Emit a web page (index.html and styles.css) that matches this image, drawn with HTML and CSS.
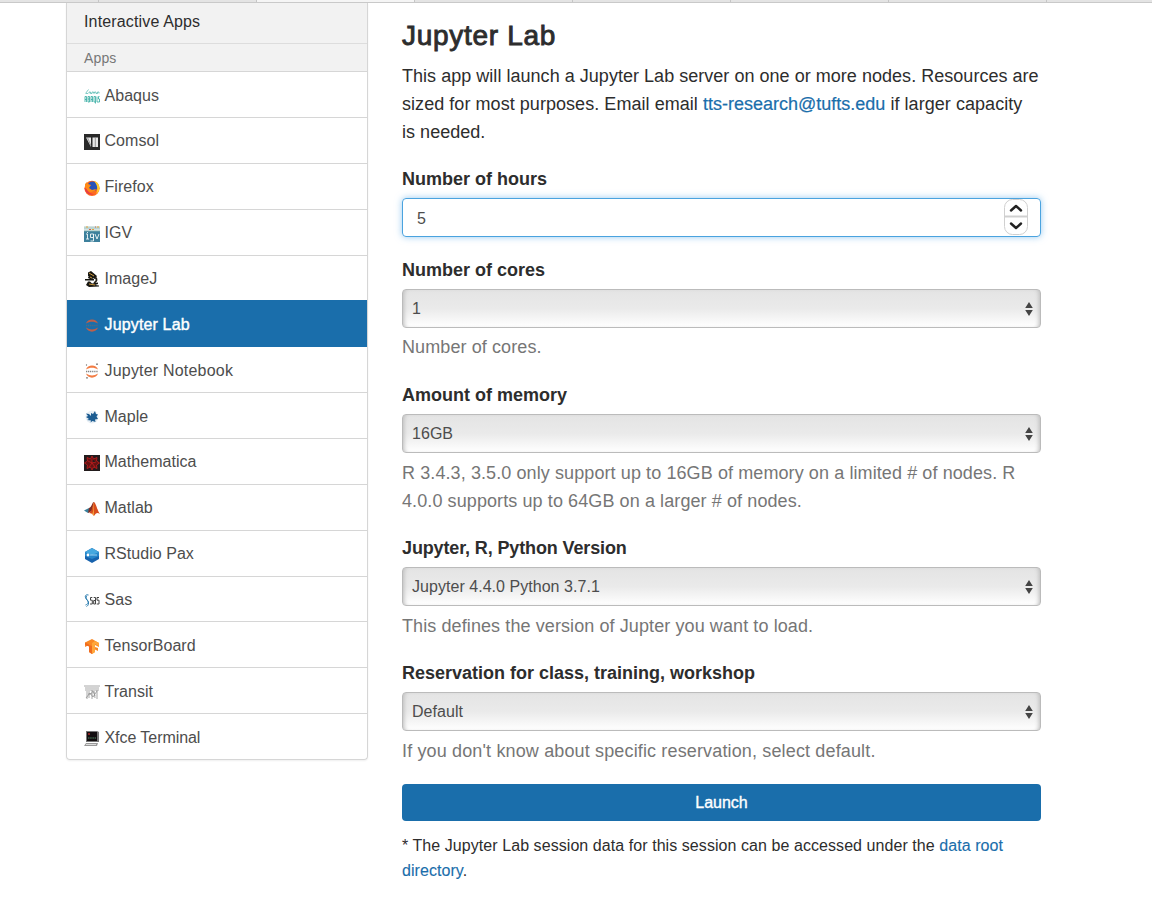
FILE: index.html
```html
<!DOCTYPE html>
<html lang="en">
<head>
<meta charset="utf-8">
<title>Jupyter Lab</title>
<link rel="stylesheet" href="styles.css">
</head>
<body>
<div class="tabs"><i></i><i></i><i class="current"></i><i></i><i></i><i></i><i></i><i></i></div>
<div class="page">
<nav class="sidebar">
  <div class="heading">Interactive Apps</div>
  <div class="subheading">Apps</div>
  <a class="app first"><svg viewBox="0 0 16 16"><g fill="none" stroke="#2eaaa0"><path d="M1.500 5.500L4.500 1.500M2 5.500h2M5 5.500V4h1.500v1.500H8V4h1.500v1.500M10.500 5.500V4H12v1.500h1.500V4H15v1.500" stroke-width=".6"/><path d="M1 14V8.500h1.500V14M1 11.500h1.500M4 14V8.500h1.500V14zM4 11h1.500M7 14V8.500h1.500V14M7 11.500h1.500M10 8.500h1.500V14H10zM11.500 14v1.500M13 8.500V14h1M15.500 8.500h-1V11h1v3h-1.500" stroke-width=".8"/></g></svg><span>Abaqus</span></a>
  <a class="app raised"><svg viewBox="0 0 16 16"><path fill="#292929" d="M0 0h16v16H0z"/><path d="M2 3.500h5V13zM8.500 3.500H14V13H8.500z" fill="#e8e8e8"/><path d="M3.500 3.500L7 12M11.300 3.500V13" stroke="#777" stroke-width=".7"/></svg><span>Comsol</span></a>
  <a class="app raised"><svg viewBox="0 0 16 16"><circle cx="8" cy="8.300" r="7.600" fill="#ff6a1f"/><circle cx="8.500" cy="6.500" r="5" fill="#2852b8"/><path d="M1 4l2-2 1 2 3 1-2 3 3 2 4-1c-1 3-5 4-8 2S1 6 1 4z" fill="#ff8b16"/><path d="M10 1c7 2 7 10 2 13 2-5 2-8-2-13z" fill="#ffce2e"/><path d="M.7 8c0 5 5 8 10 6-4 0-7-2-8-5z" fill="#e73d45"/></svg><span>Firefox</span></a>
  <a class="app raised"><svg viewBox="0 0 16 16"><path fill="#3d809c" d="M0 0h16v16H0z"/><path fill="#d5e4e4" d="M0 0h16v5H0z"/><path d="M0 2h16M0 5h16" stroke="#8eb8b2" stroke-width=".7"/><path d="M2 1h2M8 3.500h2M13 1h2" stroke="#e5a43a"/><path d="M5 3.500h2M11 1h1" stroke="#cf6048"/><path d="M2 8h1.500v5M2 13h3M3.500 6v1M9.500 8H6.500v3.500h3V8v7h-3M11 8l2 5L15 8" fill="none" stroke="#f2f6f7" stroke-width=".9"/></svg><span>IGV</span></a>
  <a class="app"><svg viewBox="0 0 16 16"><path d="M4 1.500L7 0l6 5-2 3-7-3zM5 4l4 3-1 2-4-2zM1 8h9v1.500H1zM4 10.500h2l2 2 6-1v1.500l-3 1 4 .5v1L5 16l-3-2z" fill="#171611"/><path d="M11.500 6.500c2 2 1 4-1.500 5.500" fill="none" stroke="#242016" stroke-width="1.800"/><path d="M5 2l5 3M6 6l2 1M5 13l6 1" stroke="#e0a744" stroke-width=".9"/></svg><span>ImageJ</span></a>
  <a class="app active"><svg viewBox="0 0 16 16"><g fill="#bd604a"><path d="M2 6.500c1.500-5.500 10.500-5.500 12 0-4-2.500-8-2.500-12 0zM2 10.500c1.500 5.500 10.500 5.500 12 0-4 2.500-8 2.500-12 0z"/></g><path d="M2 8.400h12" stroke="#506c82" stroke-width="1.500" stroke-dasharray="1.200 .7"/></svg><span>Jupyter Lab</span></a>
  <a class="app wide"><svg viewBox="0 0 16 16"><g fill="#f37c43"><path d="M2 6.500c1.500-5.500 10.500-5.500 12 0-4-2.500-8-2.500-12 0zM2 10.500c1.500 5.500 10.500 5.500 12 0-4 2.500-8 2.500-12 0z"/></g><path d="M2 8.400h12" stroke="#858585" stroke-width="1.500" stroke-dasharray="1.200 .7"/><circle cx="2.500" cy="2" r=".7" fill="#777"/><circle cx="13" cy="1.200" r=".9" fill="#777"/><circle cx="3" cy="14.800" r=".9" fill="#777"/></svg><span>Jupyter Notebook</span></a>
  <a class="app"><svg viewBox="0 0 16 16"><circle cx="8" cy="8" r="6.500" fill="#e8eff5"/><path d="M2 4.500l3 .5 2 2V4l2 1 2-3 1 3 2 .5-1.500 2L14 10l-3 .5.500 2.500-3-1-2 1.500.5-2L3 11l2-1-3-2 2-1z" fill="#1c5c91"/></svg><span>Maple</span></a>
  <a class="app raised"><svg viewBox="0 0 16 16"><path fill="#221b1c" d="M0 0h16v16H0z"/><path d="M8 1l1.500 3L13 2.500 12.500 6l3 2-3 2 .5 3.500L9.500 12 8 15l-1.500-3L3 13.500 3.500 10l-3-2 3-2L3 2.500 6.500 4zM8 4v4l4-1M8 8l3 4M8 8l-3 4M8 8L4 6" fill="#651313" stroke="#c51d1d" stroke-width=".8"/></svg><span>Mathematica</span></a>
  <a class="app raised"><svg viewBox="0 0 16 16"><path d="M0 9.500l5-2.500 3 2-4 3z" fill="#397f9b"/><path d="M5 7c3-1 3-6 5-6l-2 9-4 2z" fill="#7f2f25"/><path d="M10 1c2 1 3 8 6 12-3-2-4-1-6 2-1-2-3-3-5-3 4-2 3-9 5-11z" fill="#d94d1d"/><path d="M10 1v14c-1-1-1-2-2-2 2-3 1-8 2-12z" fill="#f39c3a"/></svg><span>Matlab</span></a>
  <a class="app raised"><svg viewBox="0 0 16 16"><path d="M8 1l7 4v7l-7 4-7-4V5z" fill="#1762ad"/><path d="M8 1l7 4v3H1V5z" fill="#46a8df"/><path d="M1 5l7 3 7-3v4l-7 3-7-3z" fill="#2686ca"/><circle cx="4" cy="8" r="1.400" fill="#fff"/><path d="M6 8h7" stroke="#9ed2f1"/></svg><span>RStudio Pax</span></a>
  <a class="app"><svg viewBox="0 0 16 16"><path d="M4.500 3C0 2 1 6 3 8s1.500 4-1.500 5M2.500 4c-1.500 3 2 4 2 7 0 2-1 3-2 3.500" fill="none" stroke="#287aad"/><path d="M8.300 5.500H6.500v2.700h1.800V12H6M9.700 5.500h1.800V12H9.700V8.500h1.800M15 5.500h-2v2.700h2V12h-2.300" fill="none" stroke="#444"/></svg><span>Sas</span></a>
  <a class="app"><svg viewBox="0 0 16 16"><path d="M1 4.500L8 1l7 4v4l-4-2v2l3 1v3l-3-1.500V14l-3 2-3-2V7L1 9z" fill="#f98825"/><path d="M8 5l3-2 4 2v3l-4-2v8l-3 2z" fill="#ffa63b"/><path d="M1 4.500l4 2v2L1 7zM5 7l3 1v8l-3-2z" fill="#ef6b20"/></svg><span>TensorBoard</span></a>
  <a class="app"><svg viewBox="0 0 16 16"><g fill="none" stroke="#929292" stroke-width=".8"><path d="M0 2h16M1 4h14M1 6h14M3 7v8M5 7v7M8 6v9M10 7l1 7M13 6v9M2 14l4-5 3 4 4-6M4 10h3l2-3 2 5"/></g></svg><span>Transit</span></a>
  <a class="app narrow"><svg viewBox="0 0 16 16"><path d="M2 0h11l2 1v10H2z" fill="#777"/><path d="M3 1h10v9H3z" fill="#130e10"/><path d="M4 3h2" stroke="#f33"/><path d="M4 7h8" stroke="#548e69" stroke-dasharray="1.500 .7"/><path d="M2 12h12l-1 3H0z" fill="#999"/><path d="M2 13.500h10" stroke="#ddd"/></svg><span>Xfce Terminal</span></a>
</nav>
<main class="content">
  <h1>Jupyter Lab</h1>
  <p class="intro"><span class="l1">This app will launch a Jupyter Lab server on one or more nodes. Resources are</span><br><span class="l2">sized for most purposes. Email email <a>tts-research@tufts.edu</a> if larger capacity</span><br><span>is needed.</span></p>
  <section class="field hours"><label>Number of hours</label><div class="number"><span>5</span><svg class="stepper" viewBox="0 0 26 38"><rect x="1.500" y="1.500" width="23" height="35" rx="8" fill="#fff" stroke="#d0d0d0"/><path d="M2 18.500h22" stroke="#d0d0d0" stroke-width="2"/><path d="M8 12.500l5-4.500 5 4.500M8 25.500l5 4.500 5-4.500" fill="none" stroke="#222" stroke-width="2.400" stroke-linecap="round" stroke-linejoin="round"/></svg></div></section>
  <section class="field cores"><label>Number of cores</label><div class="select"><span>1</span><svg viewBox="0 0 8 16"><path d="M4 1l3.800 6H.2zM4 15L.2 9h7.600z"/></svg></div><p class="help">Number of cores.</p></section>
  <section class="field memory"><label>Amount of memory</label><div class="select"><span>16GB</span><svg viewBox="0 0 8 16"><path d="M4 1l3.800 6H.2zM4 15L.2 9h7.600z"/></svg></div><p class="help"><span>R 3.4.3, 3.5.0 only support up to 16GB of memory on a limited # of nodes. R</span><br><span>4.0.0 supports up to 64GB on a larger # of nodes.</span></p></section>
  <section class="field version"><label>Jupyter, R, Python Version</label><div class="select"><span>Jupyter 4.4.0 Python 3.7.1</span><svg viewBox="0 0 8 16"><path d="M4 1l3.800 6H.2zM4 15L.2 9h7.600z"/></svg></div><p class="help">This defines the version of Jupter you want to load.</p></section>
  <section class="field reservation"><label>Reservation for class, training, workshop</label><div class="select"><span>Default</span><svg viewBox="0 0 8 16"><path d="M4 1l3.800 6H.2zM4 15L.2 9h7.600z"/></svg></div><p class="help">If you don't know about specific reservation, select default.</p></section>
  <div class="launch">Launch</div>
  <p class="note">* The Jupyter Lab session data for this session can be accessed under the <a>data root<br>directory</a>.</p>
</main>
</div>
</body>
</html>
```
FILE: styles.css
```css
* { box-sizing: border-box; }
body { margin: 0; height: 901px; overflow: hidden; background: #fff; color: #2d2d2d; font-family: "Liberation Sans", Arial, sans-serif; font-size: 18px; }
p, h1 { margin: 0; }
a { color: #1a6eab; }
.tabs { display: flex; height: 3px; background: #e4e4e4; border-bottom: 1px solid #c9c9c9; overflow: hidden; }
.tabs i { flex: 0 0 158px; border-right: 1px solid #c6c6c6; }
.tabs i:first-child { flex-basis: 99px; }
.tabs .current { background: #f5f5f5; }
.page { display: flex; }
.sidebar { width: 302px; margin-left: 66px; height: 757px; border: 1px solid #d6d6d6; border-top: 0; border-radius: 0 0 4px 4px; box-shadow: 0 1px 2px #0001; font-size: 16px; overflow: hidden; }
.heading { height: 41px; padding: 9px 17px; line-height: 20px; letter-spacing: .15px; background: #f2f2f2; border-bottom: 1px solid #ddd; }
.subheading { height: 28px; padding: 4px 17px; line-height: 20px; letter-spacing: .15px; background: #f2f2f2; border-bottom: 1px solid #d6d6d6; color: #777; font-size: 14px; }
.app { display: flex; align-items: center; gap: 4.5px; height: 45.87px; padding: 2px 17px 0; border-bottom: 1px solid #d6d6d6; color: #4d4d4d; }
.first { height: 45.93px; }
.app span { line-height: 20px; padding-top: .7px; letter-spacing: .04px; }
.app svg { width: 16px; height: 16px; margin-top: 2px; }
.app:nth-child(n+4) svg { margin-top: 1px; }
.app.raised span { padding: 0 0 1px; }
.wide span { letter-spacing: .2px; }
.narrow span { letter-spacing: -.06px; }
.app:last-child { border-bottom: 0; }
.active { background: #1a6eab; color: #fff; border-color: #1a6eab; box-shadow: 0 -1px #1a6eab; -webkit-text-stroke: .4px #fff; }
.active span { letter-spacing: .15px; }
.content { width: 639px; margin-left: 34px; padding-top: 15px; }
h1 { height: 44px; font-size: 28px; line-height: 35px; font-weight: 400; letter-spacing: .7px; -webkit-text-stroke: .9px #2d2d2d; }
.intro { height: 102px; line-height: 28px; white-space: nowrap; letter-spacing: .03px; }
.l2 { letter-spacing: .05px; }
.intro a { letter-spacing: 0; -webkit-text-stroke: .2px #1a6eab; }
label { display: block; height: 34px; padding-top: 1px; line-height: 28px; font-weight: 700; }
.hours { height: 91px; }
.cores { height: 125px; }
.memory { height: 153px; }
.version { height: 125px; }
.version label { letter-spacing: -.13px; }
.reservation { height: 126px; }
.number, .select { display: flex; align-items: center; justify-content: space-between; height: 39px; border-radius: 4px; font-size: 16px; color: #4d4d4d; }
.number { border: 1px solid #4aa3df; box-shadow: 0 0 7px #66afe9aa; padding: 1px 11px 0 14px; }
.number span { padding-top: 2px; }
.stepper { width: 26px; height: 38px; margin-top: -2px; }
.select { border: 1px solid #bbb; background: linear-gradient(#e4e4e4, #eaeaea 50%, #fff); box-shadow: inset 4px 0 4px -3px #bbb, inset -4px 0 4px -3px #bbb; padding: 0 7px 0 9px; letter-spacing: .04px; }
.select svg { width: 8px; height: 16px; fill: #444; }
.help { padding-top: 6px; line-height: 28px; color: #767676; white-space: nowrap; letter-spacing: .095px; }
.cores .help { padding-top: 5px; }
.reservation .help { letter-spacing: .145px; }
.launch { height: 37px; border-radius: 4px; background: #1a6eab; color: #fff; text-align: center; line-height: 37px; font-size: 16px; -webkit-text-stroke: .35px #fff; }
.note { padding-top: 12px; font-size: 16px; line-height: 25px; white-space: nowrap; letter-spacing: .065px; }
.note a { -webkit-text-stroke: .1px #1a6eab; }
```
